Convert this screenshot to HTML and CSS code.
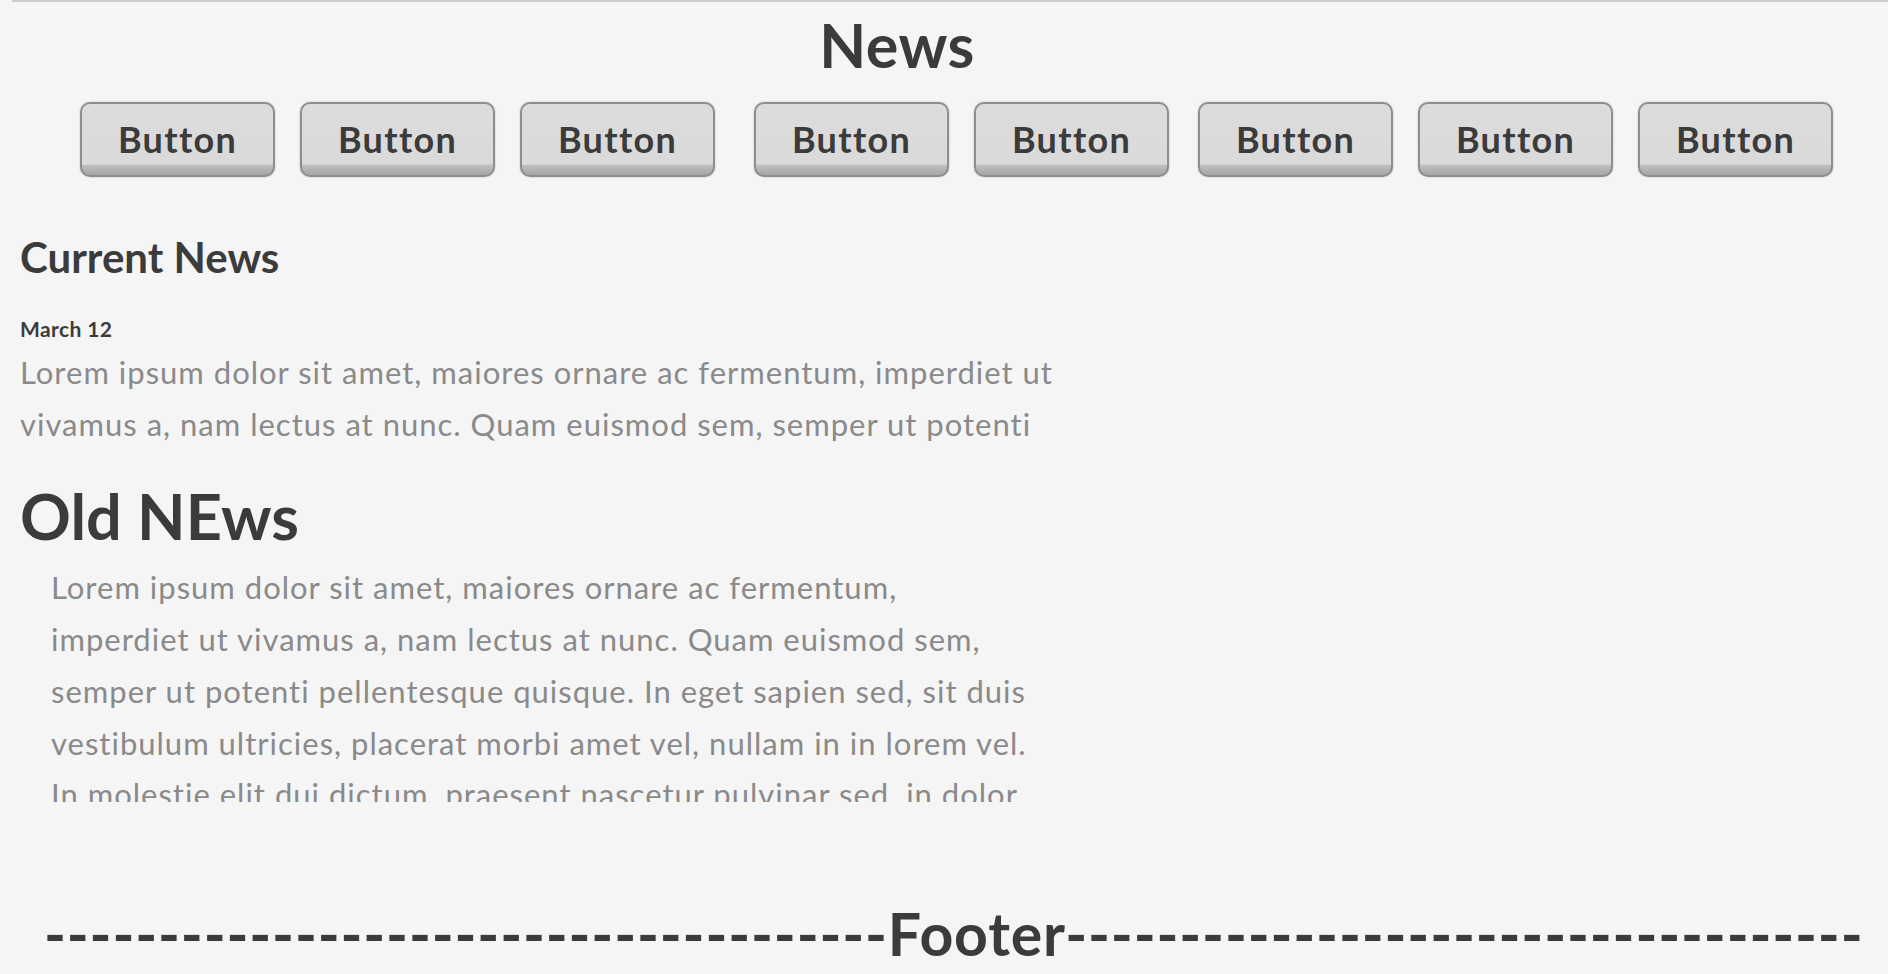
FILE: index.html
```html
<!DOCTYPE html>
<html lang="en">
<head>
<meta charset="utf-8">
<title>News</title>
<link rel="stylesheet" href="styles.css">
</head>
<body>
<header class="topbar">
  <h1 class="title">News</h1>
  <nav class="btn-row">
    <button class="btn">Button</button>
    <button class="btn">Button</button>
    <button class="btn">Button</button>
    <button class="btn btn-gap-l">Button</button>
    <button class="btn">Button</button>
    <button class="btn btn-gap-s">Button</button>
    <button class="btn">Button</button>
    <button class="btn">Button</button>
  </nav>
</header>
<main class="content">
  <section class="current">
    <h2 class="section-title">Current News</h2>
    <h3 class="date">March 12</h3>
    <p class="text">Lorem ipsum dolor sit amet, maiores ornare ac fermentum, imperdiet ut vivamus a, nam lectus at nunc. Quam euismod sem, semper ut potenti</p>
  </section>
  <section class="old">
    <h2 class="big-title">Old NEws</h2>
    <div class="old-box">
      <p class="text">Lorem ipsum dolor sit amet, maiores ornare ac fermentum, imperdiet ut vivamus a, nam lectus at nunc. Quam euismod sem, semper ut potenti pellentesque quisque. In eget sapien sed, sit duis vestibulum ultricies, placerat morbi amet vel, nullam in in lorem vel. In molestie elit dui dictum, praesent nascetur pulvinar sed, in dolor pede in aliquam, risus nec error quis pharetra. Eros metus quam augue suspendisse, metus rutrum risus erat in.</p>
    </div>
  </section>
</main>
<footer class="footer">-------------------------------------Footer-----------------------------------</footer>
</body>
</html>
```
FILE: styles.css
```css
* { box-sizing: border-box; }

html, body {
  margin: 0;
  padding: 0;
  background: #f5f5f5;
}

body {
  font-family: Lato, "Open Sans", sans-serif;
  color: #3b3b3b;
  height: 974px;
  overflow: hidden;
}

.topbar {
  margin-left: 12px;
  border-top: 2px solid #cdcdcd;
}

.title {
  margin: 7px 0 0 0;
  padding-right: 106px;
  text-align: center;
  font-size: 61px;
  line-height: 72px;
  font-weight: 700;
  letter-spacing: 0.5px;
  color: #3b3b3b;
}

.btn-row {
  display: flex;
  gap: 25px;
  margin-top: 21px;
  padding-left: 68px;
}

.btn {
  width: 195px;
  height: 75px;
  padding: 0;
  border: 2px solid #8e8e8e;
  border-radius: 10px;
  background: linear-gradient(to bottom, #dcdcdc 0%, #dadada 84%, #bdbdbd 87%, #a6a6a6 100%);
  box-shadow: 0 0 2px rgba(0, 0, 0, 0.25);
  font-family: Lato, "Open Sans", sans-serif;
  font-size: 36px;
  line-height: 71px;
  font-weight: 700;
  letter-spacing: 1.3px;
  color: #3b3b3b;
}

.btn-gap-l { margin-left: 14px; }
.btn-gap-s { margin-left: 4px; }

.content {
  padding-left: 20px;
  width: 1068px;
}

.section-title {
  margin: 55px 0 0 0;
  font-size: 42px;
  line-height: 50px;
  font-weight: 700;
}

.date {
  margin: 34px 0 0 0;
  font-size: 21px;
  line-height: 25px;
  font-weight: 700;
  letter-spacing: 0.4px;
}

.text {
  margin: 0;
  font-size: 31px;
  line-height: 51.7px;
  letter-spacing: 1px;
  color: #8a8a8a;
}

.current .text {
  margin-top: 6px;
}

.big-title {
  margin: 28px 0 0 0;
  font-size: 63px;
  line-height: 76px;
  font-weight: 700;
}

.old-box {
  margin: 8px 30px 0 31px;
  height: 240px;
  overflow: hidden;
}

.footer {
  margin-top: 97px;
  padding-left: 44px;
  white-space: nowrap;
  font-size: 59px;
  line-height: 70px;
  font-weight: 700;
  letter-spacing: 0.8px;
  color: #3b3b3b;
}
```
